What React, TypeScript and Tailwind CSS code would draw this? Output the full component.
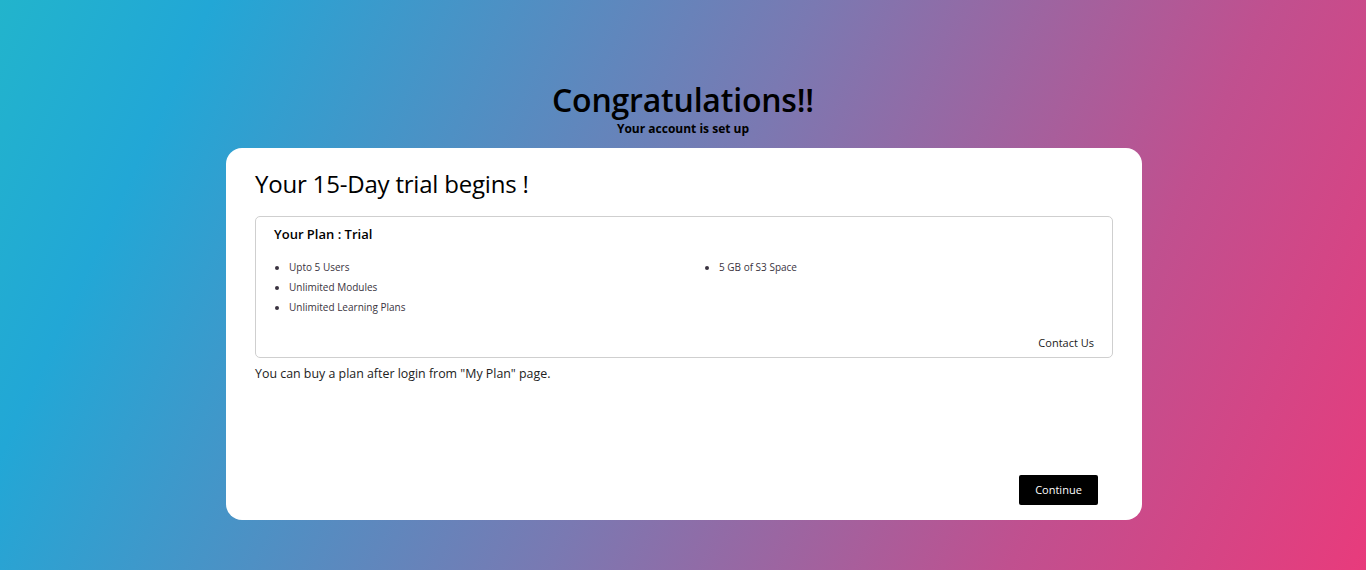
export default function App() {
  const left = ["Upto 5 Users", "Unlimited Modules", "Unlimited Learning Plans"];
  const right = ["5 GB of S3 Space"];

  return (
    <div
      className="min-h-screen w-full bg-[linear-gradient(115deg,#22b4cc_0%,#22a7d6_13%,#7a79b2_50%,#c0508f_78%,#e83b7c_100%)] flex flex-col items-center pt-[80px] pb-[50px] text-black"
      style={{ fontFamily: '"Open Sans", "Noto Sans", sans-serif' }}
    >
      <h1 className="text-[32px] leading-[40px] font-semibold tracking-[-0.2px]">Congratulations!!</h1>
      <p className="text-[12px] leading-[18px] font-bold">Your account is set up</p>

      <div className="mt-[10px] ml-[2px] w-[916px] h-[372px] bg-white rounded-[16px] px-[29px] pt-[20px] pb-[15px] flex flex-col">
        <h2 className="text-[24px] leading-[32px] font-normal tracking-[-0.2px]">Your 15-Day trial begins !</h2>

        <div className="mt-4 border border-[#cfcfcf] rounded-[5px] px-[18px] pt-[8px] pb-[5px]">
          <h3 className="text-[13px] leading-[18px] font-semibold">Your Plan : Trial</h3>
          <div className="mt-[14px] grid grid-cols-2">
            <ul className="list-disc pl-[15px] text-[10px] text-[#3a3340]">
              {left.map((item) => (
                <li key={item} className="leading-[20px]">
                  {item}
                </li>
              ))}
            </ul>
            <ul className="list-disc pl-[35px] text-[10px] text-[#3a3340]">
              {right.map((item) => (
                <li key={item} className="leading-[20px]">
                  {item}
                </li>
              ))}
            </ul>
          </div>
          <div className="mt-[17px] flex justify-end">
            <a className="text-[11px] leading-[18px] font-medium text-[#1a1a1a]">Contact Us</a>
          </div>
        </div>

        <p className="mt-[6px] text-[12.4px] leading-[20px] text-[#222]">
          You can buy a plan after login from "My Plan" page.
        </p>

        <div className="mt-auto flex justify-end pr-[15px]">
          <button className="w-[79px] h-[30px] bg-black text-white text-[11px] font-medium rounded-[2px]">
            Continue
          </button>
        </div>
      </div>
    </div>
  );
}
